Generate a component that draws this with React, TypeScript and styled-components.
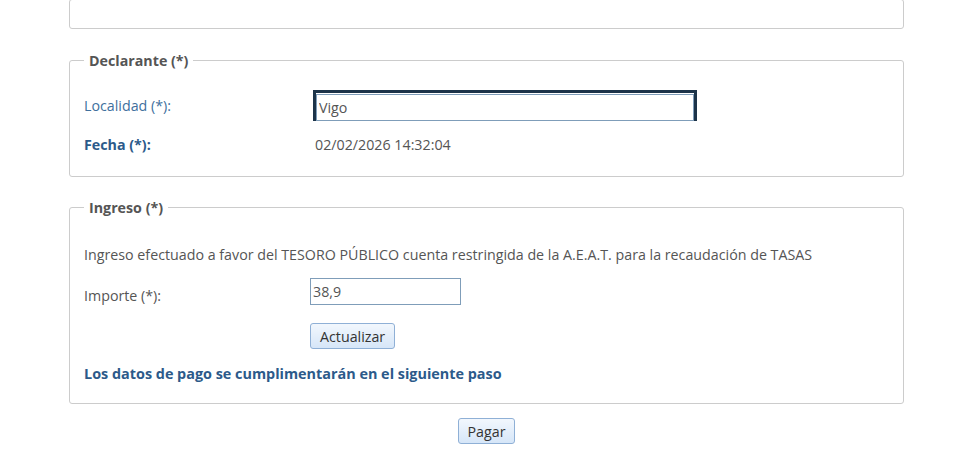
import React from "react";
import styled, { createGlobalStyle } from "styled-components";

const GlobalStyle = createGlobalStyle`
	html, body {
		margin: 0;
		padding: 0;
		background: #fff;
	}
	body {
		font-family: "Open Sans", "Noto Sans", sans-serif;
		font-size: 14.25px;
		color: #555;
	}
`;

const Page = styled.div`
	width: 835px;
	margin: 0 0 0 69px;
	display: flex;
	flex-direction: column;
`;

const TopBox = styled.div`
	height: 30px;
	margin-top: -1px;
	box-sizing: border-box;
	border: 1px solid #ccc;
	border-radius: 3px;
`;

const Fieldset = styled.fieldset<{ $mt: number; $h: number }>`
	margin: ${({ $mt }) => $mt}px 0 0;
	padding: 0 14px;
	height: ${({ $h }) => $h}px;
	box-sizing: border-box;
	border: 1px solid #ccc;
	border-radius: 3px;
	min-width: 0;
`;

const Legend = styled.legend`
	padding: 0 5px;
	margin-left: 0;
	font-weight: 700;
	color: #555;
`;

const Row = styled.div<{ $mt: number; $col: number }>`
	display: grid;
	grid-template-columns: ${({ $col }) => $col}px 1fr;
	align-items: center;
	margin-top: ${({ $mt }) => $mt}px;
`;

const Label = styled.span<{ $tone?: "blue" | "strong" | "plain"; $drop?: number }>`
	color: ${({ $tone }) =>
		$tone === "strong" ? "#2c5a8a" : $tone === "plain" ? "#555" : "#40709d"};
	font-weight: ${({ $tone }) => ($tone === "strong" ? 700 : 400)};
	padding-top: ${({ $drop }) => $drop ?? 0}px;
`;

const Value = styled.span`
	color: #555;
	padding-left: 2px;
`;

const FocusRing = styled.div`
	width: 384px;
	height: 31px;
	box-sizing: border-box;
	border: 3px solid #1c3349;
	border-bottom: none;
	padding: 1px 0 0;
`;

const TextInput = styled.input<{ $w: number }>`
	display: block;
	width: ${({ $w }) => $w}px;
	height: 27px;
	box-sizing: border-box;
	margin: 0;
	padding: 0 2px;
	border: 1px solid #7f9db9;
	font-family: "Open Sans", "Noto Sans", sans-serif;
	font-size: 14.25px;
	color: #555;
	outline: none;
	background: #fff;
`;

const Plain = styled.p`
	margin: 28px 0 0;
	color: #555;
`;

const Button = styled.button`
	font-family: "Open Sans", "Noto Sans", sans-serif;
	font-size: 14.25px;
	color: #333;
	height: 26px;
	padding: 0 9px;
	border: 1px solid #8fb0d6;
	border-radius: 3px;
	background: linear-gradient(#f2f7fd, #d6e6f8);
	cursor: pointer;
`;

const Actions = styled.div`
	margin-top: 18px;
	padding-left: 226px;
`;

const Note = styled.p`
	margin: 15px 0 0;
	font-weight: 700;
	font-size: 14.4px;
	color: #2c5a8a;
`;

const Footer = styled.div`
	display: flex;
	justify-content: center;
	margin-top: 14px;
`;

export default function App() {
	return (
		<>
			<GlobalStyle />
			<Page>
				<TopBox />
				<Fieldset $mt={22} $h={126}>
					<Legend>Declarante (*)</Legend>
					<Row $mt={20} $col={229}>
						<Label>Localidad (*):</Label>
						<FocusRing>
							<TextInput $w={378} defaultValue="Vigo" />
						</FocusRing>
					</Row>
					<Row $mt={14} $col={229}>
						<Label $tone="strong">Fecha (*):</Label>
						<Value>02/02/2026 14:32:04</Value>
					</Row>
				</Fieldset>
				<Fieldset $mt={21} $h={206}>
					<Legend>Ingreso (*)</Legend>
					<Plain>
						Ingreso efectuado a favor del TESORO PÚBLICO cuenta restringida de la
						A.E.A.T. para la recaudación de TASAS
					</Plain>
					<Row $mt={13} $col={226}>
						<Label $tone="plain" $drop={9}>
							Importe (*):
						</Label>
						<TextInput $w={151} defaultValue="38,9" />
					</Row>
					<Actions>
						<Button>Actualizar</Button>
					</Actions>
					<Note>Los datos de pago se cumplimentarán en el siguiente paso</Note>
				</Fieldset>
				<Footer>
					<Button>Pagar</Button>
				</Footer>
			</Page>
		</>
	);
}
